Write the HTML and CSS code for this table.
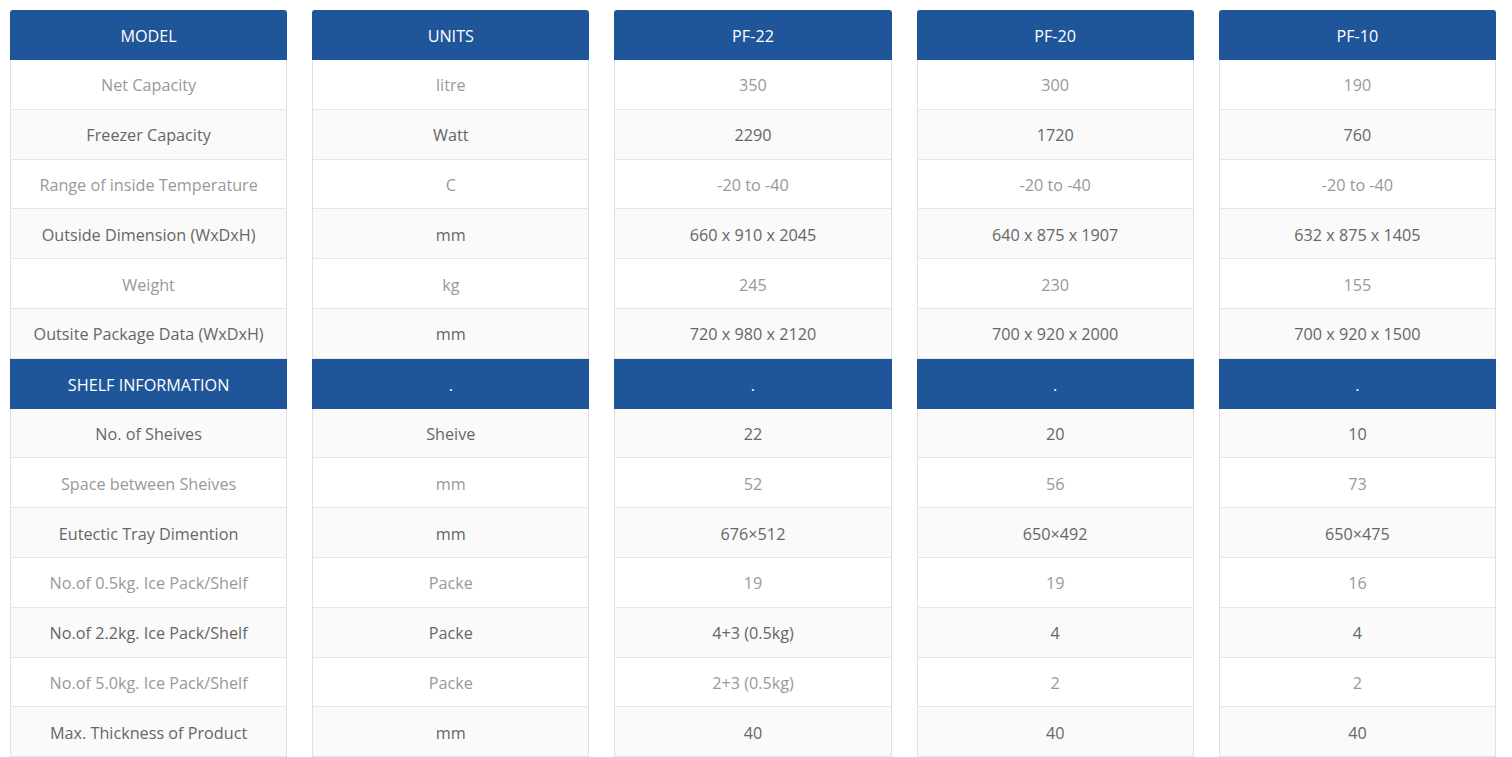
FILE: index.html
```html
<!DOCTYPE html>
<html lang="en">
<head>
<meta charset="utf-8">
<title>Specifications</title>
<link rel="stylesheet" href="styles.css">
</head>
<body>
<div class="table">
  <div class="col">
    <div class="head">MODEL</div>
    <div class="cell lt">Net Capacity</div>
    <div class="cell dk">Freezer Capacity</div>
    <div class="cell lt">Range of inside Temperature</div>
    <div class="cell dk">Outside Dimension (WxDxH)</div>
    <div class="cell lt">Weight</div>
    <div class="cell dk">Outsite Package Data (WxDxH)</div>
    <div class="sub">SHELF INFORMATION</div>
    <div class="cell dk">No. of Sheives</div>
    <div class="cell lt">Space between Sheives</div>
    <div class="cell dk">Eutectic Tray Dimention</div>
    <div class="cell lt">No.of 0.5kg. Ice Pack/Shelf</div>
    <div class="cell dk">No.of 2.2kg. Ice Pack/Shelf</div>
    <div class="cell lt">No.of 5.0kg. Ice Pack/Shelf</div>
    <div class="cell dk">Max. Thickness of Product</div>
  </div>
  <div class="col">
    <div class="head">UNITS</div>
    <div class="cell lt">litre</div>
    <div class="cell dk">Watt</div>
    <div class="cell lt">C</div>
    <div class="cell dk">mm</div>
    <div class="cell lt">kg</div>
    <div class="cell dk">mm</div>
    <div class="sub">.</div>
    <div class="cell dk">Sheive</div>
    <div class="cell lt">mm</div>
    <div class="cell dk">mm</div>
    <div class="cell lt">Packe</div>
    <div class="cell dk">Packe</div>
    <div class="cell lt">Packe</div>
    <div class="cell dk">mm</div>
  </div>
  <div class="col">
    <div class="head">PF-22</div>
    <div class="cell lt">350</div>
    <div class="cell dk">2290</div>
    <div class="cell lt">-20 to -40</div>
    <div class="cell dk">660 x 910 x 2045</div>
    <div class="cell lt">245</div>
    <div class="cell dk">720 x 980 x 2120</div>
    <div class="sub">.</div>
    <div class="cell dk">22</div>
    <div class="cell lt">52</div>
    <div class="cell dk">676×512</div>
    <div class="cell lt">19</div>
    <div class="cell dk">4+3 (0.5kg)</div>
    <div class="cell lt">2+3 (0.5kg)</div>
    <div class="cell dk">40</div>
  </div>
  <div class="col">
    <div class="head">PF-20</div>
    <div class="cell lt">300</div>
    <div class="cell dk">1720</div>
    <div class="cell lt">-20 to -40</div>
    <div class="cell dk">640 x 875 x 1907</div>
    <div class="cell lt">230</div>
    <div class="cell dk">700 x 920 x 2000</div>
    <div class="sub">.</div>
    <div class="cell dk">20</div>
    <div class="cell lt">56</div>
    <div class="cell dk">650×492</div>
    <div class="cell lt">19</div>
    <div class="cell dk">4</div>
    <div class="cell lt">2</div>
    <div class="cell dk">40</div>
  </div>
  <div class="col">
    <div class="head">PF-10</div>
    <div class="cell lt">190</div>
    <div class="cell dk">760</div>
    <div class="cell lt">-20 to -40</div>
    <div class="cell dk">632 x 875 x 1405</div>
    <div class="cell lt">155</div>
    <div class="cell dk">700 x 920 x 1500</div>
    <div class="sub">.</div>
    <div class="cell dk">10</div>
    <div class="cell lt">73</div>
    <div class="cell dk">650×475</div>
    <div class="cell lt">16</div>
    <div class="cell dk">4</div>
    <div class="cell lt">2</div>
    <div class="cell dk">40</div>
  </div>
</div>
</body>
</html>
```

FILE: styles.css
```css
html, body {
  margin: 0;
  padding: 0;
  background: #ffffff;
}

body {
  font-family: "Open Sans", "Liberation Sans", sans-serif;
  font-size: 16.2px;
}

.table {
  display: grid;
  grid-template-columns: repeat(5, 1fr);
  column-gap: 25px;
  padding: 10px 16px 0 10px;
}

.col {
  display: flex;
  flex-direction: column;
  border-bottom: 3px solid #1f5599;
}

.head {
  box-sizing: border-box;
  height: 50px;
  padding-top: 2px;
  display: flex;
  align-items: center;
  justify-content: center;
  background: #1f5599;
  color: #ffffff;
  border-radius: 3px 3px 0 0;
}

.sub {
  box-sizing: border-box;
  height: 49.8px;
  padding-top: 2px;
  display: flex;
  align-items: center;
  justify-content: center;
  background: #1f5599;
  color: #ffffff;
}

.cell {
  box-sizing: border-box;
  height: 49.8px;
  padding-top: 2px;
  display: flex;
  align-items: center;
  justify-content: center;
  border-left: 1px solid #e0e0e0;
  border-right: 1px solid #e0e0e0;
  border-bottom: 1px solid #e6e6e6;
}

.lt {
  background: #ffffff;
  color: #999999;
}

.dk {
  background: #fafafa;
  color: #666666;
}
```
